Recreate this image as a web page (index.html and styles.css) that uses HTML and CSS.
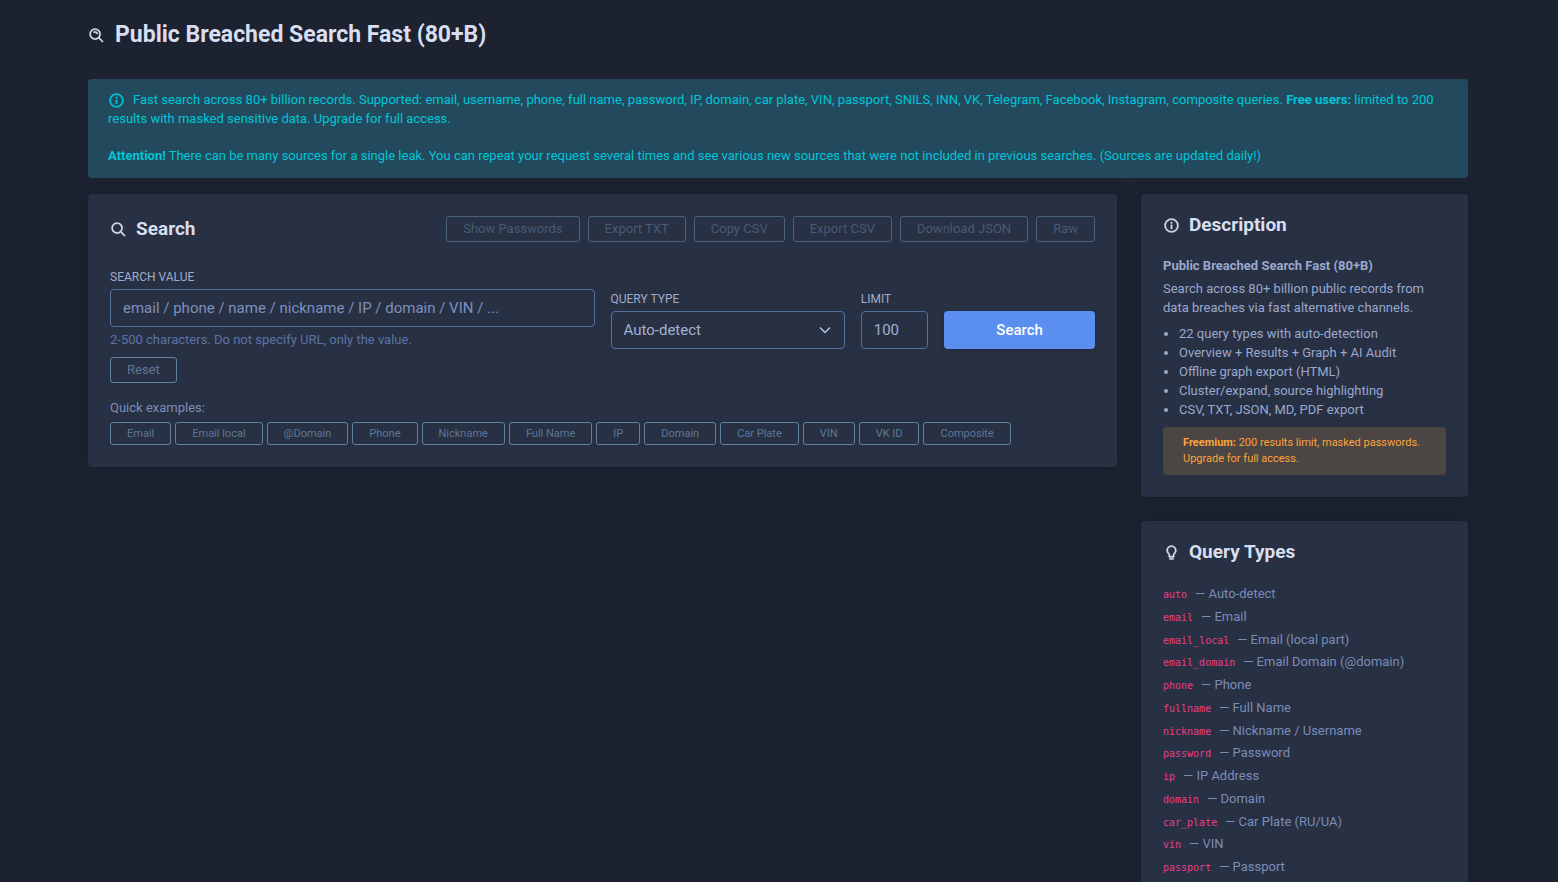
FILE: index.html
```html
<!DOCTYPE html>
<html lang="en">
<head>
<meta charset="utf-8">
<meta name="viewport" content="width=device-width, initial-scale=1">
<title>Public Breached Search Fast (80+B)</title>
<link rel="stylesheet" href="styles.css">
</head>
<body>
<div class="page">
  <header class="page-header">
    <svg class="icon" viewBox="0 0 24 24" aria-hidden="true"><path d="M10 2a8 8 0 1 0 4.900 14.300L20.300 21.700l1.400-1.400-5.400-5.400A8 8 0 0 0 10 2zm0 2a6 6 0 1 1 0 12 6 6 0 0 1 0-12z"/><path d="M11.400 8.600c.4.400.6.900.6 1.400h2c0-1.100-.4-2.100-1.200-2.800-1.500-1.500-4.200-1.500-5.700 0l1.400 1.400c.8-.7 2.200-.7 2.900 0z"/></svg>
    <h1>Public Breached Search Fast (80+B)</h1>
  </header>

  <section class="banner">
    <p><svg class="icon banner-icon" viewBox="0 0 24 24" aria-hidden="true"><path d="M12 2a10 10 0 1 0 0 20 10 10 0 0 0 0-20zm0 18a8 8 0 1 1 0-16 8 8 0 0 1 0 16z"/><path d="M11 11h2v6h-2zM11 7h2v2h-2z"/></svg>Fast search across 80+ billion records. Supported: email, username, phone, full name, password, IP, domain, car plate, VIN, passport, SNILS, INN, VK, Telegram, Facebook, Instagram, composite queries. <strong>Free users:</strong> limited to 200 results with masked sensitive data. Upgrade for full access.</p>
    <p><strong>Attention!</strong> There can be many sources for a single leak. You can repeat your request several times and see various new sources that were not included in previous searches. (Sources are updated daily!)</p>
  </section>

  <div class="columns">
    <main class="card search-card">
      <div class="card-header">
        <div class="card-title">
          <svg class="icon" viewBox="0 0 24 24" aria-hidden="true"><path d="M10 2a8 8 0 1 0 4.900 14.300L20.300 21.700l1.400-1.400-5.400-5.400A8 8 0 0 0 10 2zm0 2a6 6 0 1 1 0 12 6 6 0 0 1 0-12z"/></svg>
          <h2>Search</h2>
        </div>
        <div class="actions">
          <button class="btn" type="button" disabled>Show Passwords</button>
          <button class="btn" type="button" disabled>Export TXT</button>
          <button class="btn" type="button" disabled>Copy CSV</button>
          <button class="btn" type="button" disabled>Export CSV</button>
          <button class="btn" type="button" disabled>Download JSON</button>
          <button class="btn" type="button" disabled>Raw</button>
        </div>
      </div>
      <form>
        <div class="fields">
          <div class="field field-value">
            <label for="value">Search value</label>
            <input class="control" id="value" type="text" placeholder="email / phone / name / nickname / IP / domain / VIN / ...">
            <small class="hint">2-500 characters. Do not specify URL, only the value.</small>
          </div>
          <div class="field field-type">
            <label for="type">Query type</label>
            <div class="select-wrap">
              <select class="control" id="type"><option>Auto-detect</option></select>
              <svg class="chevron" viewBox="0 0 12 12" aria-hidden="true"><path d="M1 3.500l5 5 5-5"/></svg>
            </div>
          </div>
          <div class="field field-limit">
            <label for="limit">Limit</label>
            <input class="control" id="limit" type="text" inputmode="numeric" value="100">
          </div>
          <button class="submit" type="submit">Search</button>
        </div>
        <button class="btn reset" type="reset">Reset</button>
      </form>
      <p class="examples-label">Quick examples:</p>
      <div class="examples">
        <button class="btn chip" type="button">Email</button>
        <button class="btn chip" type="button">Email local</button>
        <button class="btn chip" type="button">@Domain</button>
        <button class="btn chip" type="button">Phone</button>
        <button class="btn chip" type="button">Nickname</button>
        <button class="btn chip" type="button">Full Name</button>
        <button class="btn chip" type="button">IP</button>
        <button class="btn chip" type="button">Domain</button>
        <button class="btn chip" type="button">Car Plate</button>
        <button class="btn chip" type="button">VIN</button>
        <button class="btn chip" type="button">VK ID</button>
        <button class="btn chip" type="button">Composite</button>
      </div>
    </main>

    <aside class="side">
      <section class="card">
        <div class="card-title">
          <svg class="icon" viewBox="0 0 24 24" aria-hidden="true"><path d="M12 2a10 10 0 1 0 0 20 10 10 0 0 0 0-20zm0 18a8 8 0 1 1 0-16 8 8 0 0 1 0 16z"/><path d="M11 11h2v6h-2zM11 7h2v2h-2z"/></svg>
          <h2>Description</h2>
        </div>
        <div class="description">
          <p class="lead"><strong>Public Breached Search Fast (80+B)</strong></p>
          <p>Search across 80+ billion public records from data breaches via fast alternative channels.</p>
          <ul>
            <li>22 query types with auto-detection</li>
            <li>Overview + Results + Graph + AI Audit</li>
            <li>Offline graph export (HTML)</li>
            <li>Cluster/expand, source highlighting</li>
            <li>CSV, TXT, JSON, MD, PDF export</li>
          </ul>
        </div>
        <p class="notice"><strong>Freemium:</strong> 200 results limit, masked passwords. Upgrade for full access.</p>
      </section>

      <section class="card">
        <div class="card-title">
          <svg class="icon" viewBox="0 0 24 24" aria-hidden="true"><path d="M9 20h6v2H9z"/><path d="M12 2C8.100 2 5 5.100 5 9c0 2.200 1 3.700 2 4.900.6.800 1 1.500 1 2.100v2a1 1 0 0 0 1 1h6a1 1 0 0 0 1-1v-2c0-.6.400-1.300 1-2.100 1-1.200 2-2.700 2-4.900 0-3.900-3.100-7-7-7zm3.400 10.700c-.7.900-1.400 2-1.400 3.300v1h-4v-1c0-1.300-.7-2.400-1.400-3.300C7.800 11.600 7 10.600 7 9a5 5 0 0 1 10 0c0 1.600-.8 2.600-1.600 3.700z"/></svg>
          <h2>Query Types</h2>
        </div>
        <ul class="types">
          <li><code>auto</code>— Auto-detect</li>
          <li><code>email</code>— Email</li>
          <li><code>email_local</code>— Email (local part)</li>
          <li><code>email_domain</code>— Email Domain (@domain)</li>
          <li><code>phone</code>— Phone</li>
          <li><code>fullname</code>— Full Name</li>
          <li><code>nickname</code>— Nickname / Username</li>
          <li><code>password</code>— Password</li>
          <li><code>ip</code>— IP Address</li>
          <li><code>domain</code>— Domain</li>
          <li><code>car_plate</code>— Car Plate (RU/UA)</li>
          <li><code>vin</code>— VIN</li>
          <li><code>passport</code>— Passport</li>
        </ul>
      </section>
    </aside>
  </div>
</div>
</body>
</html>
```
FILE: styles.css
```css
* { box-sizing: border-box; }

body {
  margin: 0;
  height: 100vh;
  overflow: hidden;
  background: #1d2230;
  color: #a1acca;
  font: 13px/19px Roboto, "Liberation Sans", sans-serif;
}

h1, h2, p, ul { margin: 0; padding: 0; }

button, input, select { margin: 0; font-family: inherit; }

.page { padding: 21px 90px 0 88px; }

.icon {
  width: 17px;
  height: 17px;
  flex: none;
  fill: currentColor;
  stroke: currentColor;
  stroke-width: 0.5;
  overflow: visible;
}

.page-header {
  display: flex;
  align-items: center;
  gap: 10px;
  height: 28px;
  color: #d7def0;
}

.page-header h1 {
  font-size: 23px;
  line-height: 28px;
  font-weight: 700;
}

.banner {
  margin-top: 30px;
  padding: 11px 20px 13px;
  border-radius: 4px;
  background: #234a5c;
  color: #00c5d8;
}

.banner p + p { margin-top: 18px; }

.banner-icon { margin-right: 8px; vertical-align: -5px; }

.columns {
  display: grid;
  grid-template-columns: repeat(12, 1fr);
  gap: 24px;
  align-items: start;
  margin-top: 16px;
}

.search-card { grid-column: span 9; }

.side {
  grid-column: span 3;
  display: grid;
  gap: 24px;
}

.card {
  padding: 22px;
  border-radius: 4px;
  background: #283043;
  box-shadow: 0 0 10px 1px #161b2799;
}

.card-header {
  display: flex;
  justify-content: space-between;
  align-items: center;
}

.card-title {
  display: flex;
  align-items: center;
  gap: 9px;
  color: #d7def0;
}

.card-title h2 {
  font-size: 19px;
  line-height: 18px;
  font-weight: 700;
}

.actions { display: flex; gap: 8px; }

.btn {
  height: 26px;
  padding: 0 16px;
  border: 1px solid #60829c;
  border-radius: 3px;
  background: transparent;
  color: #5d7896;
  font-size: 13px;
  line-height: 18px;
}

.btn:disabled { border-color: #49617a; color: #465b75; }

.fields {
  display: grid;
  grid-template-columns: repeat(12, minmax(0, 1fr));
  gap: 16px;
  align-items: end;
  margin-top: 27px;
}

.field { display: flex; flex-direction: column; }
.field-value { grid-column: span 6; }
.field-type { grid-column: span 3; }

.field label {
  margin-bottom: 4px;
  font-size: 12px;
  line-height: 16px;
  text-transform: uppercase;
}

.control {
  width: 100%;
  height: 38px;
  padding: 0 12px;
  border: 1px solid #53709f;
  border-radius: 4px;
  background: transparent;
  color: #a1b0d0;
  font-size: 15px;
  appearance: none;
}

.control::placeholder { color: #7c90bd; opacity: 1; }

.hint {
  margin-top: 3px;
  color: #5b73a4;
  font-size: 13px;
}

.select-wrap { position: relative; }

.chevron {
  position: absolute;
  top: 13px;
  right: 14px;
  width: 12px;
  height: 12px;
  fill: none;
  stroke: #b4c0dc;
  stroke-width: 1.500;
  pointer-events: none;
}

.submit {
  grid-column: span 2;
  height: 38px;
  border: 0;
  border-radius: 4px;
  background: #5b8fef;
  box-shadow: 0 2px 4px #1b223466;
  color: #fff;
  font-size: 15px;
  font-weight: 500;
}

.reset { display: block; margin-top: 8px; }

.examples-label { margin-top: 15px; color: #7c8fb9; }

.examples {
  display: flex;
  flex-wrap: wrap;
  gap: 4px;
  margin-top: 5px;
}

.chip { height: 23px; font-size: 11px; }

.description { margin-top: 22px; color: #98a9cd; }

.lead { margin-bottom: 4px; }

.description ul { margin-top: 7px; padding-left: 16px; }

.notice {
  margin-top: 8px;
  padding: 8px 20px;
  border-radius: 4px;
  background: #4b4543;
  color: #fba43b;
  font-size: 11px;
  line-height: 16px;
}

.types {
  margin-top: 22px;
  list-style: none;
  color: #7a8db8;
  line-height: 1.75;
}

.types code {
  margin-right: 8px;
  color: #e83e8c;
  font: 10px "DejaVu Sans Mono", monospace;
}
```
